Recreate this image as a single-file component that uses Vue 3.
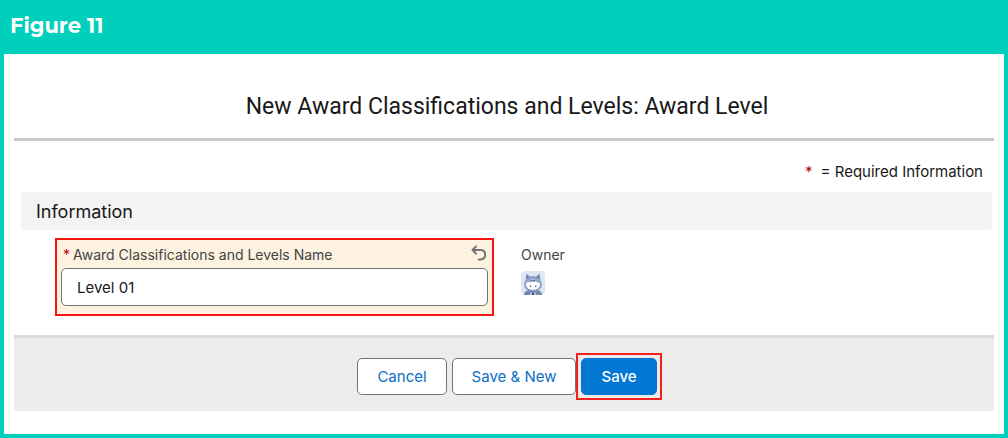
<script setup>
import { ref } from 'vue'

const original = ''
const levelName = ref('Level 01')
function undo() {
  levelName.value = original
}
</script>

<template>
  <figure class="figure">
    <figcaption class="caption">Figure 11</figcaption>
    <form class="panel" @submit.prevent>
      <h1 class="title">New Award Classifications and Levels: Award Level</h1>
      <p class="legend"><span class="star">*</span><span>= Required Information</span></p>
      <h2 class="section">Information</h2>
      <div class="fields">
        <div class="field">
          <div class="field-head">
            <label class="label" for="level-name"><span class="star">*</span>Award Classifications and Levels Name</label>
            <button class="undo" type="button" aria-label="Undo" @click="undo">
              <svg viewBox="0 0 16 16" width="16" height="16" fill="none" stroke="#747474" stroke-width="2" stroke-linecap="round" stroke-linejoin="round">
                <path d="M5 1.5 1.5 5 5 8.5" />
                <path d="M2 5H9.5C12.6 5 14.2 7 14.2 9.6S12.6 14.4 9.5 14.4H7.8" />
              </svg>
            </button>
          </div>
          <input id="level-name" v-model="levelName" class="input" type="text" required />
        </div>
        <div class="owner">
          <span class="owner-label">Owner</span>
          <svg class="avatar" viewBox="0 0 24 24" width="24" height="24" role="img" aria-label="Owner avatar">
            <rect width="24" height="24" rx="4" fill="#e1e7f2" />
            <path d="M3 24C3 20 7 18.500 12 18.500S21 20 21 24Z" fill="#7189ae" />
            <path d="M4.600 9 5 3.600Q5.300 2.500 6.400 3.300L9.300 5.500Q12 4.700 14.700 5.500L17.600 3.300Q18.700 2.500 19 3.600L19.400 9Q21 11 21 13.500C21 18 17 20 12 20S3 18 3 13.500Q3 11 4.600 9Z" fill="#8ba3c7" />
            <path d="M5.800 7.300 6.100 4.800 8 6.200ZM18.200 7.300 17.900 4.800 16 6.200Z" fill="#4a6490" />
            <ellipse cx="12" cy="13.600" rx="7" ry="5.200" fill="#fff" />
            <path d="M5.500 12C7 8 17 8 18.500 12Q17 10.800 16 11L14.800 10 13.200 11 11.500 9.900 9.800 11.100 8.300 10.500Q7 10.800 5.500 12Z" fill="#566f98" />
            <circle cx="9.500" cy="15.200" r=".8" fill="#344f78" />
            <circle cx="14.800" cy="15.200" r=".8" fill="#344f78" />
            <path d="M8.500 24 10 21 12 21.800 14 21 15.500 24Z" fill="#b9c8df" />
            <path d="M11 21.500H13V24H11Z" fill="#344f78" />
          </svg>
        </div>
      </div>
      <footer class="actions">
        <button class="btn" type="button">Cancel</button>
        <button class="btn" type="button">Save &amp; New</button>
        <span class="highlight"><button class="btn primary" type="submit">Save</button></span>
      </footer>
    </form>
  </figure>
</template>

<style>
body {
  margin: 0;
  background: #00cfbb;
}
</style>

<style scoped>
* {
  box-sizing: border-box;
}
.figure {
  margin: 0;
  padding: 0 4px 4px;
  background: #00cfbb;
  font-family: Inter, "Liberation Sans", sans-serif;
  color: #181818;
}
.caption {
  padding: 11px 6px 13px;
  font-family: Montserrat, Inter, sans-serif;
  font-size: 21px;
  line-height: 30px;
  font-weight: 700;
  color: #fff;
}
.panel {
  padding: 38px 10px 23px;
  background: #fff;
}
.title {
  margin: 0;
  padding: 0 0 16px 6px;
  border-bottom: 3px solid #c9c9c9;
  font-family: Roboto, Inter, sans-serif;
  font-size: 23px;
  line-height: 30px;
  font-weight: 400;
  text-align: center;
}
.legend {
  display: flex;
  justify-content: flex-end;
  gap: 8px;
  margin: 0;
  padding: 21px 11px 10px 0;
  font-size: 15px;
  line-height: 20px;
}
.star {
  color: #ba0517;
}
.section {
  margin: 0 2px 8px 7px;
  padding: 5px 15px 3px;
  border-radius: 4px;
  background: #f3f3f3;
  font-size: 18px;
  line-height: 30px;
  font-weight: 400;
}
.fields {
  display: grid;
  grid-template-columns: 1fr 1fr;
  gap: 27px;
  padding: 0 34px 0 41px;
}
.field {
  padding: 4px 4px 8px;
  border: 2px solid #f81410;
  background: #fdf2e0;
}
.field-head {
  display: flex;
  justify-content: space-between;
  height: 24px;
}
.label {
  display: flex;
  gap: 3px;
  padding-left: 2px;
  font-size: 14px;
  line-height: 22px;
  color: #444;
}
.undo {
  width: 16px;
  height: 16px;
  margin: 1px 1px 0 0;
  padding: 0;
  border: 0;
  background: none;
}
.undo svg {
  display: block;
}
.input {
  display: block;
  width: 100%;
  height: 38px;
  padding: 0 15px;
  border: 1px solid #747474;
  border-radius: 5px;
  background: #fff;
  font: inherit;
  font-size: 15px;
  color: #181818;
}
.owner {
  padding-top: 6px;
}
.owner-label {
  display: block;
  font-size: 14px;
  line-height: 22px;
  color: #444;
}
.avatar {
  display: block;
  margin-top: 5px;
}
.actions {
  display: flex;
  justify-content: center;
  align-items: center;
  margin-top: 19px;
  padding: 15px 0 11px 11px;
  border-top: 3px solid #dddcdb;
  background: #eeecea;
}
.btn {
  height: 37px;
  padding: 0 19px;
  border: 1px solid #747474;
  border-radius: 5px;
  background: #fff;
  font: inherit;
  font-size: 15px;
  color: #0b6fc4;
}
.btn + .btn {
  margin-left: 5px;
}
.highlight {
  display: flex;
  padding: 3px;
  border: 2px solid #f32020;
}
.btn.primary {
  border-color: #0176d3;
  background: #0176d3;
  color: #fff;
  font-weight: 500;
}
</style>
